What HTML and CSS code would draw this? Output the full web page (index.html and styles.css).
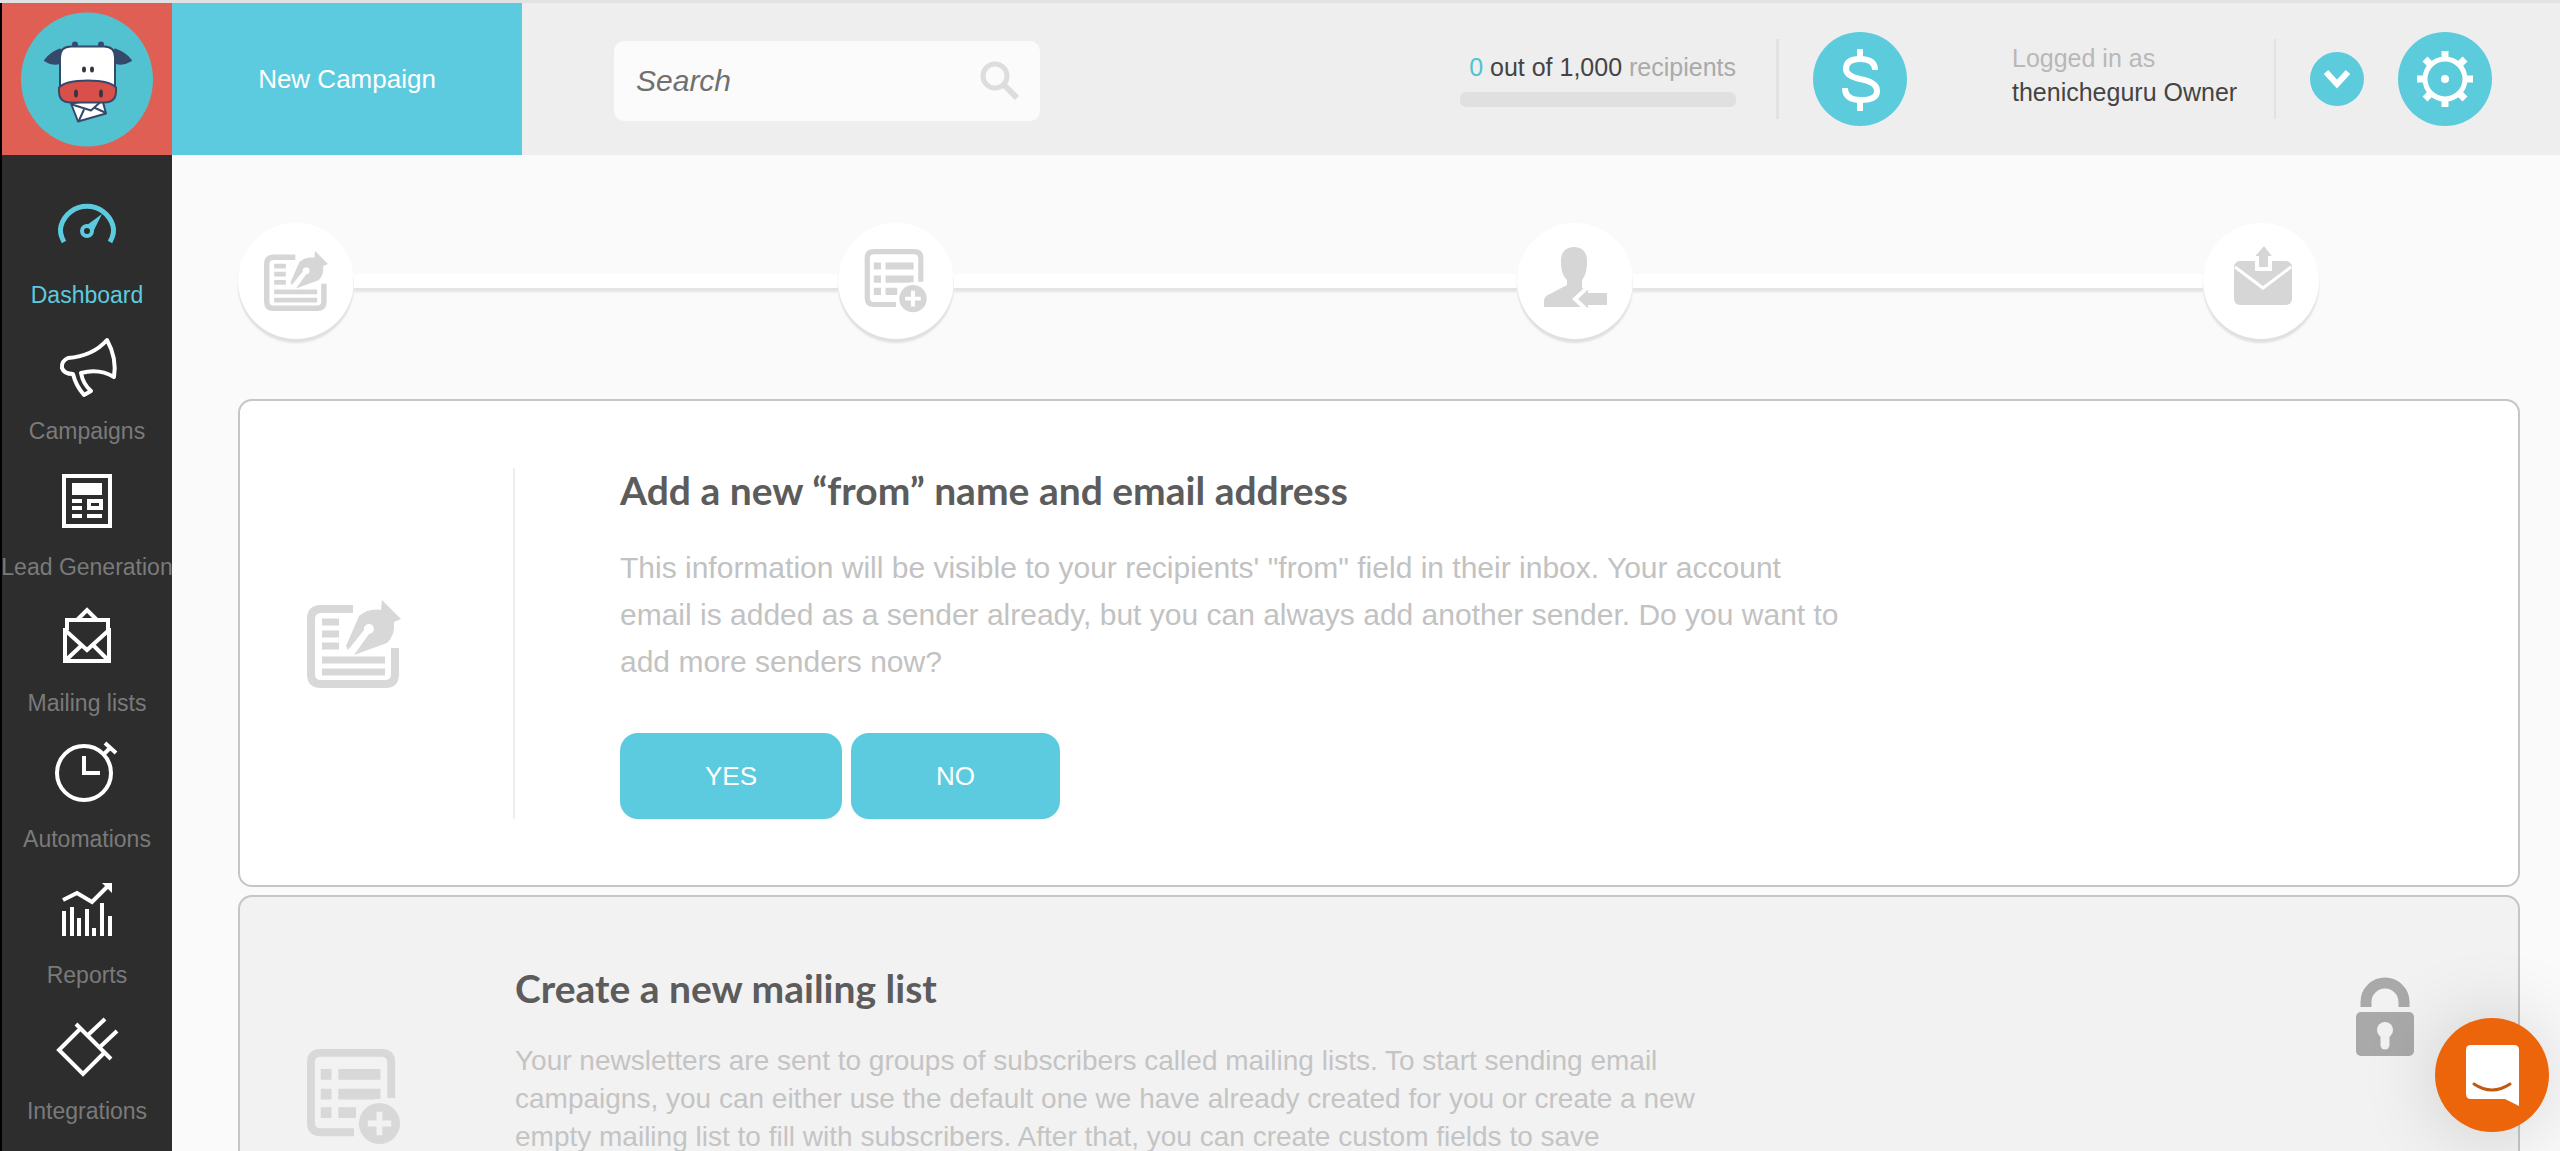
FILE: index.html
```html
<!DOCTYPE html>
<html lang="en">
<head>
<meta charset="utf-8">
<title>Dashboard</title>
<link rel="stylesheet" href="styles.css">
</head>
<body>
<svg class="sprite" aria-hidden="true">
  <symbol id="i-sender" viewBox="0 0 94 92">
    <path d="M46 11H14Q4 11 4 21V76Q4 86 14 86H78Q88 86 88 76V50" fill="none" stroke="currentColor" stroke-width="8"/>
    <path d="M15 24H32M15 36H32M15 48H32M15 62H78M15 74H78" stroke="currentColor" stroke-width="7"/>
    <path d="M39 48L52 18Q62 10 74 12L75 2L94 21L87 24Q88 38 80 45L47 57L62 36A5 5 0 1 0 57 32L41 52Z" fill="currentColor"/>
  </symbol>
  <symbol id="i-list" viewBox="0 0 96 98">
    <path d="M48 85H14Q4 85 4 75V14Q4 4 14 4H76Q86 4 86 14V50" fill="none" stroke="currentColor" stroke-width="8"/>
    <path d="M14 26H25M32 26H75M14 46H25M32 46H75M14 65H25M32 65H50" stroke="currentColor" stroke-width="11"/>
    <circle class="cut" cx="74" cy="76" r="25"/>
    <circle cx="74" cy="76" r="21" fill="currentColor"/>
    <path class="cut-line" d="M74 64V88M62 76H86" stroke-width="6"/>
  </symbol>
</svg>
<div class="app">
  <aside class="sidebar">
    <a class="logo" href="#" aria-label="Home">
      <svg viewBox="2 3 170 151">
        <ellipse cx="87" cy="79" rx="66" ry="67" fill="#53c2d0"/>
        <g stroke="#35496b" stroke-width="2" stroke-linejoin="round">
          <path d="M60 49Q50 53 45 60Q52 65 61 62ZM115 49Q126 53 131 60Q123 65 115 62Z" fill="#35496b"/>
          <circle cx="75" cy="44" r="2" fill="#35496b"/><circle cx="101" cy="44" r="2" fill="#35496b"/>
          <path d="M71 103L102 98L106 113L78 121Z" fill="#fff"/>
          <path d="M72 104L91 110L102 100M79 120L84 109M105 112L94 107" fill="none"/>
          <path d="M60 86V57Q60 46 71 46H104Q115 46 115 57V86Z" fill="#fff"/>
          <path d="M59 87Q66 80 88 80Q109 80 116 87V91Q116 102 104 102H71Q59 102 59 91Z" fill="#d94f4a"/>
        </g>
        <g fill="#35353f"><ellipse cx="84" cy="69" rx="2" ry="3"/><ellipse cx="92" cy="69" rx="2" ry="3"/><ellipse cx="76" cy="93" rx="2" ry="4"/><ellipse cx="101" cy="93" rx="2" ry="4"/></g>
      </svg>
    </a>
    <nav class="nav">
      <a class="nav-item active" href="#">
        <svg viewBox="0 0 64 64"><path d="M9 42Q4 33 6 26A27 27 0 0 1 58 26Q60 33 55 42" fill="none" stroke="currentColor" stroke-width="5"/><circle cx="32" cy="31" r="5" fill="none" stroke="currentColor" stroke-width="4"/><path d="M32 25L47 14L38 32Z" fill="currentColor"/></svg>
        <span>Dashboard</span></a>
      <a class="nav-item" href="#">
        <svg viewBox="0 0 64 64"><path d="M52 4Q62 22 59 41Q44 32 26 37Q28 48 36 55L29 59Q21 50 18 38Q9 38 7 32Q6 25 13 22Q38 20 52 4Z" fill="none" stroke="#fff" stroke-width="4" stroke-linejoin="round"/></svg>
        <span>Campaigns</span></a>
      <a class="nav-item" href="#">
        <svg viewBox="0 0 64 64"><path d="M9 4H55V54H9Z" fill="none" stroke="#fff" stroke-width="4"/><path d="M17 11H47V23H17Z" fill="#fff"/><path d="M17 29H27M17 36H27M17 44H27M32 44H47" stroke="#fff" stroke-width="4"/><path d="M34 29H46V36H34Z" fill="none" stroke="#fff" stroke-width="4"/></svg>
        <span>Lead Generation</span></a>
      <a class="nav-item" href="#">
        <svg viewBox="0 0 64 64"><path d="M12 22V12H53V22M22 12L32 2L42 12M10 20V53H54V20M10 22L32 42L54 22M11 52L27 37M53 52L38 37" fill="none" stroke="#fff" stroke-width="4"/></svg>
        <span>Mailing lists</span></a>
      <a class="nav-item" href="#">
        <svg viewBox="0 0 64 64"><circle cx="29" cy="29" r="27" fill="none" stroke="#fff" stroke-width="4"/><path d="M29 12V29H45M49 10L54 5M50 -1L61 9" fill="none" stroke="#fff" stroke-width="4"/></svg>
        <span>Automations</span></a>
      <a class="nav-item" href="#">
        <svg viewBox="0 0 64 64"><path d="M8 20L22 13L37 22L54 5" fill="none" stroke="#fff" stroke-width="4"/><path d="M47 3H57V13Z" fill="#fff"/><path d="M9 56V31M17 56V27M24 56V38M32 56V29M39 56V48M47 56V23M55 56V36" stroke="#fff" stroke-width="4"/></svg>
        <span>Reports</span></a>
      <a class="nav-item" href="#">
        <svg viewBox="0 0 64 64"><path d="M21 8L56 43M25 13L4 34L28 58L50 36M33 19L50 3M45 31L62 15" fill="none" stroke="#fff" stroke-width="4"/></svg>
        <span>Integrations</span></a>
    </nav>
  </aside>

  <div class="page">
    <header class="header">
      <a class="new-campaign" href="#">New Campaign</a>
      <form class="search">
        <input type="search" placeholder="Search" aria-label="Search">
        <button class="search-btn" aria-label="Run search"><svg viewBox="0 0 40 40"><circle cx="15" cy="15" r="12" fill="none" stroke="currentColor" stroke-width="5"/><path d="M24 24L37 37" stroke="currentColor" stroke-width="6"/></svg></button>
      </form>
      <div class="quota">
        <p><b>0</b> out of 1,000 <span>recipients</span></p>
        <div class="quota-bar"></div>
      </div>
      <div class="rule"></div>
      <button class="round" aria-label="Billing"><svg viewBox="0 0 94 94"><path d="M62 38Q62 27 47 27Q33 27 33 37Q33 44 47 47Q64 50 64 59Q64 68 48 68Q32 68 32 56M47 17V28M47 68V79" fill="none" stroke="#fff" stroke-width="6"/></svg></button>
      <div class="user"><span>Logged in as</span><strong>thenicheguru Owner</strong></div>
      <div class="rule thin"></div>
      <button class="round small" aria-label="Account menu"><svg viewBox="0 0 54 54"><path d="M16 20L27 32L38 20" fill="none" stroke="#fff" stroke-width="6"/></svg></button>
      <button class="round" aria-label="Settings"><svg viewBox="0 0 94 94"><circle cx="47" cy="47" r="20" fill="none" stroke="#fff" stroke-width="5"/><circle cx="47" cy="47" r="4" fill="#fff"/><path d="M47 19V26M47 68V75M19 47H26M68 47H75M27 27L32 32M62 62L67 67M27 67L32 62M62 32L67 27" stroke="#fff" stroke-width="7"/></svg></button>
    </header>

    <main class="content">
      <div class="steps">
        <div class="step"><svg class="step-icon"><use href="#i-sender"/></svg></div>
        <div class="link link-a"></div>
        <div class="step"><svg class="step-icon"><use href="#i-list"/></svg></div>
        <div class="link link-b"></div>
        <div class="step"><svg class="step-icon" viewBox="-1 2 64 64"><path d="M30 0C39 0 43 6 43 14C43 22 42 28 38 33V41L54 50Q58 52 58 60H0V54Q0 49 6 47L23 38V33C18 28 17 22 17 14C17 6 21 0 30 0Z" fill="currentColor"/><path d="M31 52L46 38V44H65V60H46V66Z" fill="currentColor" stroke="#fff" stroke-width="4"/></svg></div>
        <div class="link link-c"></div>
        <div class="step"><svg class="step-icon" viewBox="-2 4 64 64"><rect x="3" y="16" width="58" height="44" rx="6" fill="currentColor"/><path d="M4 22L32 43L60 22" fill="none" stroke="#fff" stroke-width="3"/><path d="M26 24V13H20L33 -2L45 13H39V24Z" fill="currentColor" stroke="#fff" stroke-width="4"/></svg></div>
      </div>

      <section class="card">
        <div class="card-side ruled"><svg class="card-icon"><use href="#i-sender"/></svg></div>
        <div class="card-body">
          <h2>Add a new “from” name and email address</h2>
          <p class="lead">This information will be visible to your recipients' "from" field in their inbox. Your account email is added as a sender already, but you can always add another sender. Do you want to add more senders now?</p>
          <div class="actions"><button class="btn">YES</button><button class="btn">NO</button></div>
        </div>
      </section>

      <section class="card locked">
        <div class="card-side"><svg class="card-icon"><use href="#i-list"/></svg></div>
        <div class="card-body">
          <h2>Create a new mailing list</h2>
          <p class="note">Your newsletters are sent to groups of subscribers called mailing lists. To start sending email campaigns, you can either use the default one we have already created for you or create a new empty mailing list to fill with subscribers. After that, you can create custom fields to save</p>
        </div>
        <svg class="lock" viewBox="0 0 60 80"><path d="M11 30V25A19 19 0 0 1 49 25V30" fill="none" stroke="#a9a9a9" stroke-width="11"/><rect x="1" y="35" width="58" height="44" rx="5" fill="#a9a9a9"/><circle cx="30" cy="53" r="8" fill="#f2f2f2"/><path d="M30 54V68" stroke="#f2f2f2" stroke-width="9" stroke-linecap="round"/></svg>
      </section>
    </main>
  </div>
</div>
<button class="chat" aria-label="Open chat"><svg viewBox="0 0 114 114"><path d="M36 27H79Q84 27 84 32V88L70 81H36Q31 81 31 76V32Q31 27 36 27Z" fill="#fff"/><path d="M39 66Q57 78 75 66" fill="none" stroke="#c05a10" stroke-width="3" stroke-linecap="round"/></svg></button>
</body>
</html>
```
FILE: styles.css
```css
* { box-sizing: border-box; }

body {
  margin: 0;
  height: 100vh;
  overflow: hidden;
  border-top: 3px solid #e2e2e2;
  background: #fafafa;
  color: #444;
  font-family: "Liberation Sans", Arial, sans-serif;
  font-size: 25px;
}

h2, p { margin: 0; }
a { color: inherit; text-decoration: none; }
svg { display: block; flex: none; }
button {
  padding: 0;
  border: 0;
  background: none;
  color: inherit;
  font: inherit;
  cursor: pointer;
}

.sprite { position: absolute; width: 0; height: 0; }

.app { display: flex; height: 100%; }

/* Sidebar */
.sidebar {
  flex: none;
  width: 172px;
  border-left: 2px solid #000;
  background: #2d2d2d;
}
.logo { display: block; height: 152px; background: #e05f54; }
.logo svg { width: 170px; height: 152px; }
.nav {
  display: flex;
  flex-direction: column;
  gap: 28px;
  padding-top: 45px;
}
.nav-item {
  display: flex;
  flex-direction: column;
  align-items: center;
  gap: 18px;
  color: #7a7a7a;
  font-size: 23px;
  line-height: 26px;
  white-space: nowrap;
}
.nav-item svg { width: 64px; height: 64px; overflow: visible; }
.nav-item.active { color: #5ccbdf; }

/* Header */
.page {
  flex: 1;
  min-width: 0;
  overflow: auto;
  scrollbar-width: none;
}
.header {
  display: flex;
  align-items: center;
  height: 152px;
  padding-right: 68px;
  background: #eee;
}
.new-campaign {
  display: flex;
  align-items: center;
  justify-content: center;
  align-self: stretch;
  width: 350px;
  background: #5ccbdf;
  color: #fff;
  font-size: 26px;
}
.search {
  display: flex;
  align-items: center;
  width: 426px;
  height: 80px;
  margin: 4px auto 0 92px;
  padding: 0 20px 0 22px;
  border-radius: 10px;
  background: #fbfbfb;
}
.search input {
  flex: 1;
  min-width: 0;
  padding: 0;
  border: 0;
  outline: 0;
  background: none;
  font: italic 30px "Liberation Sans", Arial, sans-serif;
}
.search input::placeholder { color: #707070; opacity: 1; }
.search-btn { color: #ddd; }
.search-btn svg { width: 40px; height: 40px; }

.quota { width: 276px; margin-right: 40px; }
.quota p { line-height: 30px; text-align: right; }
.quota b { color: #4fc3d4; font-weight: 400; }
.quota span { color: #aaa; }
.quota-bar { height: 15px; margin-top: 10px; border-radius: 6px; background: #e0e0e0; }

.rule { width: 3px; height: 80px; margin-right: 34px; background: #e2e2e2; }
.rule.thin { width: 2px; }

.round {
  flex: none;
  width: 94px;
  height: 94px;
  border-radius: 50%;
  background: #5ccbdb;
}
.round.small { width: 54px; height: 54px; margin-right: 34px; }
.user {
  display: flex;
  flex-direction: column;
  width: 222px;
  margin: 0 40px 0 105px;
  padding-bottom: 8px;
  line-height: 34px;
  white-space: nowrap;
}
.user span { color: #b8b8b8; }
.user strong { font-weight: 400; }

/* Progress steps */
.content { padding: 68px 40px 0 66px; }
.steps {
  display: flex;
  align-items: center;
  margin-bottom: 60px;
  padding-right: 201px;
}
.step {
  display: flex;
  flex: none;
  align-items: center;
  justify-content: center;
  width: 116px;
  height: 116px;
  border-radius: 50%;
  background: #fff;
  box-shadow: 0 4px 2px #e0e0e0;
  color: #d6d6d6;
}
.step-icon { width: 64px; height: 64px; overflow: visible; }
.link { height: 14px; background: #fff; box-shadow: 0 4px 2px #e4e4e4; }
.link-a { flex: 484; }
.link-b { flex: 564; }
.link-c { flex: 570; }

/* Cards */
.card {
  --cut: #fff;
  display: flex;
  padding: 67px 0 66px;
  border: 2px solid #c6c6c6;
  border-radius: 14px;
  background: #fff;
}
.card + .card { margin-top: 8px; }
.cut { fill: var(--cut, #fff); }
.cut-line { stroke: var(--cut, #fff); }
.card.locked {
  --cut: #f2f2f2;
  align-items: flex-start;
  padding: 69px 103px 69px 0;
  background: #f2f2f2;
}
.card-side {
  display: flex;
  flex: none;
  align-items: center;
  width: 275px;
  padding-left: 67px;
  color: #d8d8d8;
}
.card-side.ruled { margin-right: 105px; border-right: 2px solid #eee; }
.card-icon { width: 94px; height: 92px; }
.locked .card-side { padding-top: 82px; }
.locked .card-icon { height: 98px; }
.card-body { flex: 1; min-width: 0; }
.card h2 {
  margin-bottom: 32px;
  color: #5c5c5c;
  font: 700 39px/44px Lato, sans-serif;
}
.lead { max-width: 1236px; color: #c2c2c2; font-size: 30px; line-height: 47px; }
.note { max-width: 1200px; color: #c4c4c4; font-size: 28px; line-height: 38px; }
.actions { display: flex; gap: 9px; margin-top: 48px; }
.btn {
  height: 86px;
  padding: 0 85px;
  border-radius: 18px;
  background: #5ccbdf;
  color: #fff;
  font-size: 26px;
}
.lock { width: 60px; height: 80px; margin-top: 11px; }

/* Chat launcher */
.chat {
  position: fixed;
  right: 11px;
  bottom: 19px;
  width: 114px;
  height: 114px;
  border-radius: 50%;
  background: #ec650a;
  box-shadow: 0 2px 80px rgba(0, 0, 0, .16);
}
```
